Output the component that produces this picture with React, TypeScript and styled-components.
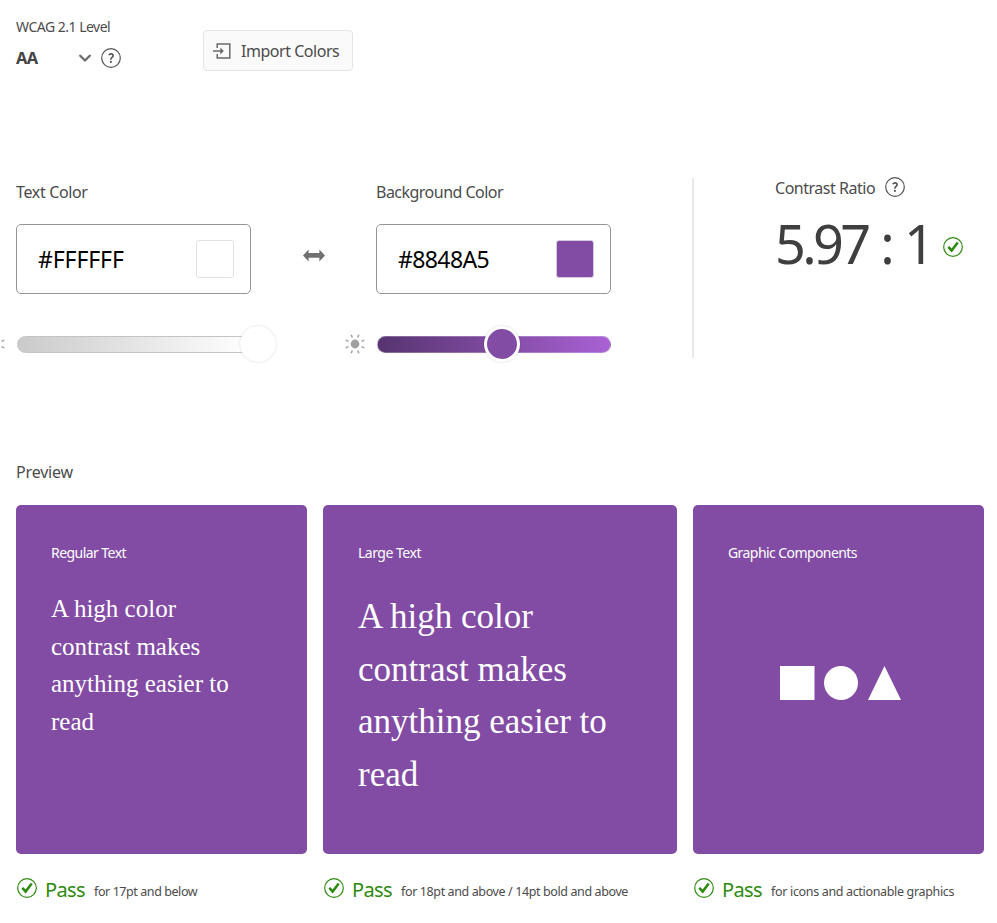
import React from "react";
import styled, { createGlobalStyle } from "styled-components";

const PURPLE = "#824ca4";
const GREEN = "#2d8a0e";

const GlobalStyle = createGlobalStyle`
  * { box-sizing: border-box; }
  body {
    margin: 0;
    background: #fff;
    color: #4b4b4b;
    font-family: "Noto Sans", sans-serif;
    overflow: hidden;
  }
`;

const Page = styled.main`
  height: 923px;
  padding: 0 13px 0 16px;
  overflow: hidden;
  background: #fff;
`;

const Header = styled.header`
  display: flex;
  height: 177px;
`;

const LevelGroup = styled.div`
  width: 187px;
  padding-top: 17px;
`;

const Label = styled.div<{ $size?: number; $spacing?: number }>`
  font-size: ${(p) => p.$size ?? 16}px;
  letter-spacing: ${(p) => p.$spacing ?? -0.5}px;
  line-height: 20px;
  white-space: nowrap;
`;

const LevelRow = styled.div`
  display: flex;
  align-items: center;
  height: 24px;
  margin-top: 9px;
`;

const LevelSelect = styled.button`
  display: flex;
  align-items: center;
  justify-content: space-between;
  width: 76px;
  margin-right: 9px;
  padding: 0;
  border: 0;
  background: none;
  color: #444;
  font: 700 16.5px/24px "Noto Sans", sans-serif;
  letter-spacing: -0.6px;
`;

const ImportButton = styled.button`
  display: flex;
  align-items: center;
  gap: 10px;
  width: 150px;
  height: 41px;
  margin-top: 30px;
  padding: 0 0 0 9px;
  border: 1px solid #e4e4e4;
  border-radius: 4px;
  background: #fafafa;
  color: #4b4b4b;
  font: 400 16px/22px "Noto Sans", sans-serif;
  letter-spacing: -0.47px;
  white-space: nowrap;
`;

const Controls = styled.section`
  display: grid;
  grid-template-columns: 235px 125px 235px 83px 1fr;
  height: 285px;
`;

const ColorColumn = styled.div`
  padding-top: 5px;
`;

const ColorField = styled.div`
  display: flex;
  align-items: center;
  justify-content: space-between;
  height: 70px;
  margin-top: 22px;
  padding: 0 16px 0 21px;
  border: 1px solid #959595;
  border-radius: 5px;
`;

const HexValue = styled.span<{ $spacing: number }>`
  color: #000;
  font-size: 23px;
  line-height: 30px;
  letter-spacing: ${(p) => p.$spacing}px;
`;

const Swatch = styled.span<{ $color: string; $edge: string }>`
  width: 38px;
  height: 38px;
  border: 1px solid ${(p) => p.$edge};
  border-radius: 3px;
  background: ${(p) => p.$color};
`;

const SliderRow = styled.div`
  display: flex;
  align-items: center;
  gap: 11px;
  height: 38px;
  margin: 31px 0 0 -32px;
`;

const Track = styled.div<{ $fill: string; $edge: string }>`
  position: relative;
  flex: 1;
  height: 17px;
  border: 1px solid ${(p) => p.$edge};
  border-radius: 9px;
  background: ${(p) => p.$fill};
`;

const Thumb = styled.span<{ $color: string; $left: number }>`
  position: absolute;
  top: 50%;
  left: ${(p) => p.$left}px;
  width: 36px;
  height: 36px;
  border: 3px solid #fff;
  border-radius: 50%;
  background: ${(p) => p.$color};
  box-shadow: 0 0 2px rgba(0, 0, 0, 0.2);
  transform: translate(-50%, -50%);
`;

const SwapCell = styled.div`
  display: flex;
  justify-content: center;
  padding-top: 70px;
`;

const Divider = styled.div`
  justify-self: end;
  width: 2px;
  height: 180px;
  margin-top: 1px;
  background: #e8e8e8;
`;

const RatioColumn = styled.div`
  padding-left: 81px;
`;

const RatioHeading = styled.div`
  display: flex;
  align-items: center;
  gap: 10px;
  height: 20px;

  ${Label} {
    padding-top: 2px;
  }
`;

const RatioRow = styled.div`
  display: flex;
  align-items: center;
  height: 74px;
  margin-top: 9px;
  gap: 12px;

  & > svg {
    margin-top: 7px;
  }
`;

const RatioValue = styled.div`
  color: #3f3f3f;
  font-size: 54px;
  line-height: 74px;
  letter-spacing: -3.7px;
  word-spacing: 2.6px;
  white-space: nowrap;
`;

const Cards = styled.section`
  display: grid;
  grid-template-columns: 291px 354px 291px;
  column-gap: 16px;
  margin-top: 23px;
`;

const Card = styled.div`
  display: flex;
  flex-direction: column;
  height: 349px;
  padding: 38px 35px 0;
  border-radius: 5px;
  background: ${PURPLE};
  color: #fff;
`;

const Sample = styled.p<{ $size: number; $top: number; $width: number }>`
  width: ${(p) => p.$width}px;
  margin: ${(p) => p.$top}px 0 0;
  font-family: "Liberation Serif", serif;
  font-size: ${(p) => p.$size}px;
  line-height: 1.5;
`;

const Shapes = styled.svg`
  display: block;
  margin: 103px 0 0 52px;
`;

const Result = styled.div`
  display: flex;
  align-items: center;
  height: 24px;
  margin-top: 22px;
  padding-left: 1px;
`;

const Verdict = styled.span`
  margin-left: 8px;
  padding-top: 3px;
  color: ${GREEN};
  font-size: 20px;
  line-height: 24px;
  letter-spacing: -0.6px;
`;

const Scope = styled.span<{ $spacing: number }>`
  margin-left: 9px;
  padding-top: 7px;
  font-size: 12.5px;
  line-height: 18px;
  letter-spacing: ${(p) => p.$spacing}px;
  white-space: nowrap;
`;

const Icon = styled.svg`
  flex: none;
  display: block;
`;

function HelpIcon() {
  return (
    <Icon width="20" height="20" viewBox="0 0 20 20" fill="none" stroke="#555">
      <circle cx="10" cy="10" r="9.3" strokeWidth="1.2" />
      <path d="M7.8 7.1C8.4 6.2 9.1 5.9 10 5.9c1.3 0 2.1.7 2.1 1.8 0 1.6-2.2 1.8-2.2 3.5v.6" strokeWidth="1.6" />
      <circle cx="9.9" cy="13.9" r="1.05" fill="#555" stroke="none" />
    </Icon>
  );
}

function CheckIcon() {
  return (
    <Icon width="20" height="20" viewBox="0 0 20 20">
      <circle cx="10" cy="10" r="9.3" fill="none" stroke={GREEN} strokeWidth="1.2" />
      <path d="M4.4 10.8 6.1 9.1l2.5 2.5 5.1-6.8 2 1.4-6.5 8.8q-.5.6-1.1 0z" fill={GREEN} />
    </Icon>
  );
}

function ChevronIcon() {
  return (
    <Icon width="14" height="9" viewBox="0 0 14 9" fill="none" stroke="#6a6a6a" strokeWidth="2.3" strokeLinecap="round" strokeLinejoin="round">
      <path d="m2.2 1.8 4.8 4.7 4.8-4.7" />
    </Icon>
  );
}

function ImportIcon() {
  return (
    <Icon width="18" height="16" viewBox="0 0 18 16" fill="none" stroke="#6a6a6a" strokeWidth="1.5">
      <path d="M4.2 5V.9h12.6v14.2H4.2V11M0 8h9" />
      <path d="M7.3 4.6v6.8L10.8 8z" fill="#6a6a6a" stroke="none" />
    </Icon>
  );
}

function SwapIcon() {
  return (
    <Icon width="22" height="16" viewBox="0 0 22 16" fill="#707070">
      <path d="M0 8.4 5.6 2.4v3.6h10.8V2.4L22 8.4l-5.6 6v-3.6H5.6v3.6z" />
    </Icon>
  );
}

const RAYS = [22.5, 67.5, 112.5, 157.5, 202.5, 247.5, 292.5, 337.5];

function SunIcon() {
  return (
    <Icon width="22" height="22" viewBox="-11 -11 22 22">
      <circle r="4.4" fill="#a0a0a0" />
      {RAYS.map((angle) => (
        <path key={angle} d="M0-7v-3.1" stroke="#a0a0a0" strokeWidth="1.5" transform={`rotate(${angle})`} />
      ))}
    </Icon>
  );
}

type ColorControlProps = {
  label: string;
  labelSpacing: number;
  hex: string;
  hexSpacing: number;
  color: string;
  swatchEdge: string;
  track: string;
  trackEdge: string;
  thumbLeft: number;
};

function ColorControl(p: ColorControlProps) {
  return (
    <ColorColumn>
      <Label $spacing={p.labelSpacing}>{p.label}</Label>
      <ColorField>
        <HexValue $spacing={p.hexSpacing}>{p.hex}</HexValue>
        <Swatch $color={p.color} $edge={p.swatchEdge} />
      </ColorField>
      <SliderRow>
        <SunIcon />
        <Track $fill={p.track} $edge={p.trackEdge}>
          <Thumb $color={p.color} $left={p.thumbLeft} />
        </Track>
      </SliderRow>
    </ColorColumn>
  );
}

function PassResult({ scope, spacing }: { scope: string; spacing: number }) {
  return (
    <Result>
      <CheckIcon />
      <Verdict>Pass</Verdict>
      <Scope $spacing={spacing}>{scope}</Scope>
    </Result>
  );
}

export default function App() {
  return (
    <>
      <GlobalStyle />
      <Page>
        <Header>
          <LevelGroup>
            <Label $size={14}>WCAG 2.1 Level</Label>
            <LevelRow>
              <LevelSelect>
                AA
                <ChevronIcon />
              </LevelSelect>
              <HelpIcon />
            </LevelRow>
          </LevelGroup>
          <ImportButton>
            <ImportIcon />
            Import Colors
          </ImportButton>
        </Header>

        <Controls>
          <ColorControl
            label="Text Color"
            labelSpacing={-0.35}
            hex="#FFFFFF"
            hexSpacing={-0.1}
            color="#fff"
            swatchEdge="#e2e2e2"
            track="linear-gradient(90deg, #cacaca, #fff)"
            trackEdge="#c4c4c4"
            thumbLeft={239.5}
          />
          <SwapCell>
            <SwapIcon />
          </SwapCell>
          <ColorControl
            label="Background Color"
            labelSpacing={-0.52}
            hex="#8848A5"
            hexSpacing={-0.6}
            color={PURPLE}
            swatchEdge="#d8c8e2"
            track="linear-gradient(90deg, #563470, #824ca4 53%, #a962d5)"
            trackEdge="rgba(255, 255, 255, 0.25)"
            thumbLeft={123.5}
          />
          <Divider />
          <RatioColumn>
            <RatioHeading>
              <Label $spacing={-0.48}>Contrast Ratio</Label>
              <HelpIcon />
            </RatioHeading>
            <RatioRow>
              <RatioValue>5.97 : 1</RatioValue>
              <CheckIcon />
            </RatioRow>
          </RatioColumn>
        </Controls>

        <Label $spacing={-0.17}>Preview</Label>
        <Cards>
          <div>
            <Card>
              <Label $size={14} $spacing={-0.55}>Regular Text</Label>
              <Sample $size={25} $top={27} $width={200}>A high color contrast makes anything easier to read</Sample>
            </Card>
            <PassResult scope="for 17pt and below" spacing={-0.43} />
          </div>
          <div>
            <Card>
              <Label $size={14} $spacing={-0.49}>Large Text</Label>
              <Sample $size={35} $top={28} $width={284}>A high color contrast makes anything easier to read</Sample>
            </Card>
            <PassResult scope="for 18pt and above / 14pt bold and above" spacing={-0.39} />
          </div>
          <div>
            <Card>
              <Label $size={14} $spacing={-0.57}>Graphic Components</Label>
              <Shapes width="121" height="34" viewBox="0 0 121 34" fill="#fff">
                <rect width="34.5" height="34" />
                <circle cx="61" cy="17" r="17" />
                <path d="M104.5 0 121 34H88z" />
              </Shapes>
            </Card>
            <PassResult scope="for icons and actionable graphics" spacing={-0.34} />
          </div>
        </Cards>
      </Page>
    </>
  );
}
